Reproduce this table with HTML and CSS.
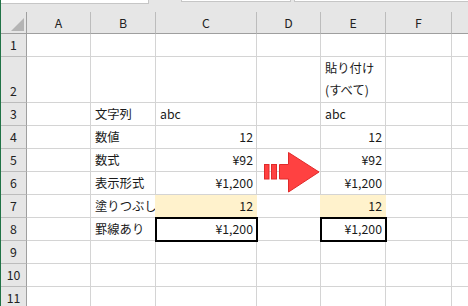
FILE: index.html
```html
<!DOCTYPE html>
<html>
<head>
    <meta charset="utf-8">
    <title>Book1 - Excel</title>
    <link rel="stylesheet" href="styles.css">
</head>
<body>
    <div class="window">
        <!-- bottom edge of the name box / formula bar -->
        <div class="formula-strip">
            <div class="name-box"></div>
            <div class="fx-box"></div>
            <div class="formula-box"></div>
        </div>

        <div class="sheet">
            <div class="corner"><div class="select-all"></div></div>
            <div class="colhead">A</div>
            <div class="colhead">B</div>
            <div class="colhead">C</div>
            <div class="colhead">D</div>
            <div class="colhead">E</div>
            <div class="colhead">F</div>
            <div class="colhead"></div>

            <div class="rowhead">1</div>
            <div class="cell"></div><div class="cell"></div><div class="cell"></div><div class="cell"></div><div class="cell"></div><div class="cell"></div><div class="cell"></div>

            <div class="rowhead tall">2</div>
            <div class="cell"></div><div class="cell"></div><div class="cell"></div><div class="cell"></div>
            <div class="cell wrap">貼り付け<br>(すべて)</div>
            <div class="cell"></div><div class="cell"></div>

            <div class="rowhead">3</div>
            <div class="cell"></div><div class="cell">文字列</div><div class="cell">abc</div><div class="cell"></div>
            <div class="cell">abc</div><div class="cell"></div><div class="cell"></div>

            <div class="rowhead">4</div>
            <div class="cell"></div><div class="cell">数値</div><div class="cell num">12</div><div class="cell"></div>
            <div class="cell num">12</div><div class="cell"></div><div class="cell"></div>

            <div class="rowhead">5</div>
            <div class="cell"></div><div class="cell">数式</div><div class="cell num">¥92</div><div class="cell"></div>
            <div class="cell num">¥92</div><div class="cell"></div><div class="cell"></div>

            <div class="rowhead">6</div>
            <div class="cell"></div><div class="cell">表示形式</div><div class="cell num">¥1,200</div><div class="cell"></div>
            <div class="cell num">¥1,200</div><div class="cell"></div><div class="cell"></div>

            <div class="rowhead">7</div>
            <div class="cell"></div><div class="cell">塗りつぶし</div><div class="cell num filled">12</div><div class="cell"></div>
            <div class="cell num filled">12</div><div class="cell"></div><div class="cell"></div>

            <div class="rowhead">8</div>
            <div class="cell"></div><div class="cell">罫線あり</div><div class="cell num boxed">¥1,200</div><div class="cell"></div>
            <div class="cell num boxed">¥1,200</div><div class="cell"></div><div class="cell"></div>

            <div class="rowhead">9</div>
            <div class="cell"></div><div class="cell"></div><div class="cell"></div><div class="cell"></div><div class="cell"></div><div class="cell"></div><div class="cell"></div>

            <div class="rowhead">10</div>
            <div class="cell"></div><div class="cell"></div><div class="cell"></div><div class="cell"></div><div class="cell"></div><div class="cell"></div><div class="cell"></div>

            <div class="rowhead">11</div>
            <div class="cell"></div><div class="cell"></div><div class="cell"></div><div class="cell"></div><div class="cell"></div><div class="cell"></div><div class="cell"></div>

            <!-- block arrow shape floating over column D -->
            <svg class="arrow" width="60" height="46" viewBox="0 0 60 46">
                <rect x="2.5" y="14.5" width="4.5" height="14.5" fill="#ff4141" stroke="#e02a2a"/>
                <rect x="9.5" y="14.5" width="5" height="14.5" fill="#ff4141" stroke="#e02a2a"/>
                <polygon points="17.5,14.5 26.5,14.5 26.5,2.5 57,22 26.5,42 26.5,29 17.5,29" fill="#ff4141" stroke="#e02a2a"/>
            </svg>
        </div>
    </div>
</body>
</html>
```

FILE: styles.css
```css
body {
    margin: 0;
    background-color: #e6e6e6;
    font-family: "Noto Sans CJK JP", "Noto Sans", sans-serif;
    font-size: 12.3px;
    color: #1a1a1a;
}

.window {
    width: 467px;
    height: 306px;
    overflow: hidden;
    border-left: 1px solid #217346;
}

.formula-strip {
    height: 12px;
    display: flex;
    align-items: flex-start;
}

.name-box {
    width: 147px;
    height: 3px;
    background-color: white;
    border-right: 1px solid #c6c6c6;
    border-bottom: 1px solid #c6c6c6;
}

.fx-box {
    width: 108px;
    height: 1px;
    margin-left: 32px;
    background-color: white;
    border: 1px solid #c6c6c6;
    border-top: none;
}

.formula-box {
    flex: 1;
    height: 1px;
    margin-left: 3px;
    background-color: white;
    border-left: 1px solid #c6c6c6;
    border-bottom: 1px solid #c6c6c6;
}

.sheet {
    position: relative;
    display: grid;
    grid-template-columns: 26px 64px 65px 101px 64px 65px 66px 100px;
    grid-template-rows: 22px 23px 46px repeat(9, 23px);
    background-color: white;
}

.sheet > div {
    box-sizing: border-box;
    line-height: 22px;
    white-space: nowrap;
    overflow: hidden;
}

.corner {
    background-color: #e6e6e6;
    border-right: 1px solid #9f9f9f;
    border-bottom: 1px solid #9f9f9f;
    display: flex;
    justify-content: flex-end;
    align-items: flex-end;
    padding: 0 2px 2px 0;
}

.select-all {
    width: 13px;
    height: 13px;
    background-color: #b4b4b4;
    clip-path: polygon(100% 0, 100% 100%, 0 100%);
}

.colhead {
    background-color: #e6e6e6;
    border-right: 1px solid #bcbcbc;
    border-bottom: 1px solid #9f9f9f;
    text-align: center;
    color: #222;
}

.rowhead {
    background-color: #e6e6e6;
    border-right: 1px solid #9f9f9f;
    border-bottom: 1px solid #bcbcbc;
    text-align: center;
    color: #222;
}

.rowhead.tall {
    padding-top: 23px;
}

.cell {
    border-right: 1px solid #d4d4d4;
    border-bottom: 1px solid #d4d4d4;
    padding: 0 3px 0 4px;
}

.num {
    text-align: right;
}

.filled {
    background-color: #fff2cc;
    border-right-color: #fff2cc;
    box-shadow: -1px 0 0 #fff2cc;
}

.boxed {
    outline: 2px solid #000;
    outline-offset: -1px;
    z-index: 1;
}

.arrow {
    position: absolute;
    left: 261px;
    top: 138px;
}
```
